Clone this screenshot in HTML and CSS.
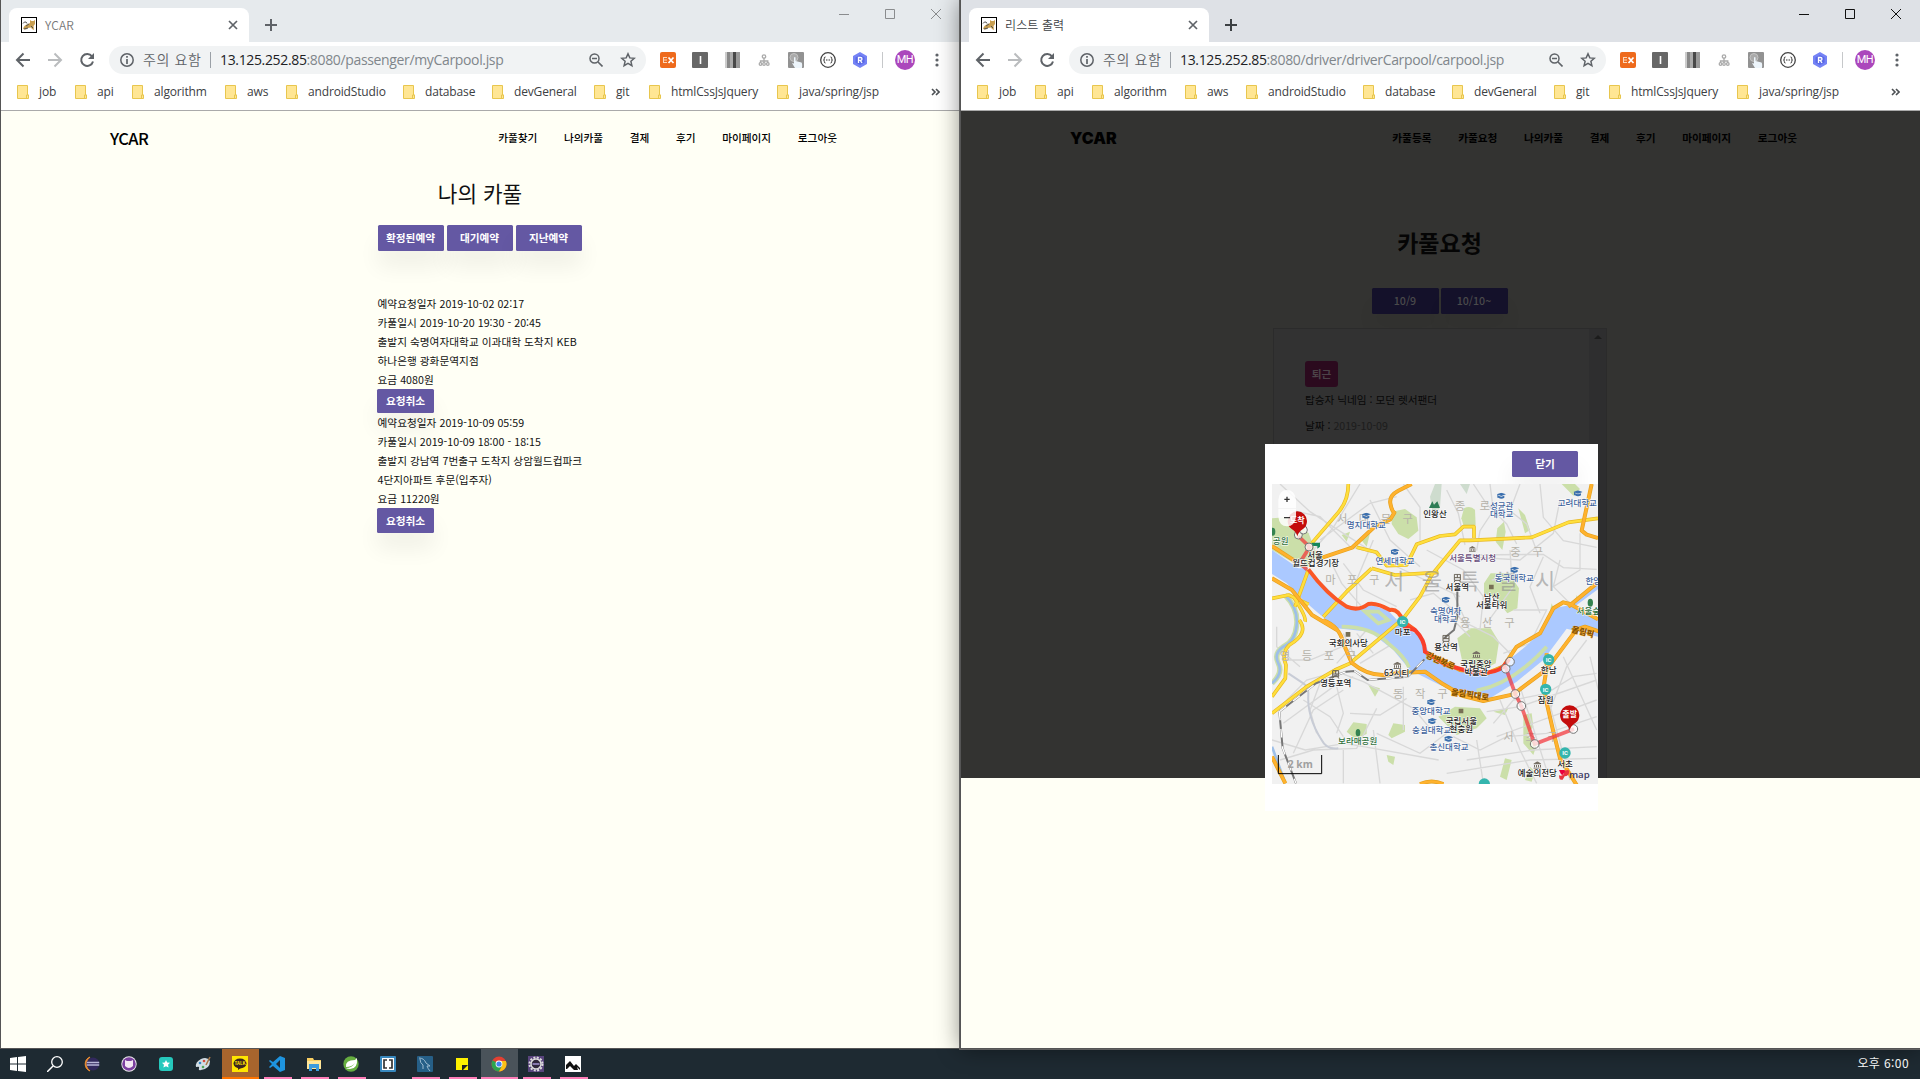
FILE: index.html
```html
<!DOCTYPE html>
<html lang="ko">
<head>
<meta charset="utf-8">
<title>YCAR</title>
<link rel="stylesheet" href="styles.css">
</head>
<body>
<svg class="defs" width="0" height="0" aria-hidden="true">
  <symbol id="cat" viewBox="0 0 16 16"><rect x=".5" y=".5" width="15" height="15" fill="#fff" stroke="#000"/><path d="M2 12q1-4 5-5l2-1 0-3 1.500 1h2l1.500-1v4l-1.500 2 .5 4-2-1-1-1.500-3 .5-2 1.500z" fill="#c9a052"/><path d="M2 6.500q1-2 3-1.500l1 1.500M5 9l3-2M3 12l4-1M10 9l2 2" stroke="#555" fill="none"/></symbol>
  <symbol id="close" viewBox="0 0 10 10"><path d="M1 1l8 8M9 1L1 9" stroke="currentColor" stroke-width="1.700"/></symbol>
  <symbol id="plus" viewBox="0 0 12 12"><path d="M6 0v12M0 6h12" stroke="currentColor" stroke-width="2"/></symbol>
  <symbol id="back" viewBox="0 0 16 16"><path d="M15 8H2M8.500 1.500L2 8l6.500 6.500" fill="none" stroke="currentColor" stroke-width="2"/></symbol>
  <symbol id="forward" viewBox="0 0 16 16"><path d="M1 8h13M7.500 1.500L14 8l-6.500 6.500" fill="none" stroke="currentColor" stroke-width="2"/></symbol>
  <symbol id="reload" viewBox="0 0 16 16"><path d="M13 4.300A6 6 0 1 0 14 9.500" fill="none" stroke="currentColor" stroke-width="2"/><path d="M15 1v6H9z" fill="currentColor"/></symbol>
  <symbol id="info" viewBox="0 0 14 14"><circle cx="7" cy="7" r="6.200" fill="none" stroke="currentColor" stroke-width="1.500"/><path d="M7 3v1.700M7 6v5" stroke="currentColor" stroke-width="1.700"/></symbol>
  <symbol id="zoom" viewBox="0 0 14 14"><circle cx="5.500" cy="5.500" r="4.500" fill="none" stroke="currentColor" stroke-width="1.500"/><path d="M9 9l4.500 4.500M3 5.500h5" stroke="currentColor" stroke-width="1.600"/></symbol>
  <symbol id="star" viewBox="0 0 16 16"><path d="M8 1.800l1.800 4.100 4.500.4-3.400 3 1 4.400L8 11.400l-3.900 2.300 1-4.400-3.400-3 4.500-.4z" fill="none" stroke="currentColor" stroke-width="1.500"/></symbol>
  <symbol id="ex" viewBox="0 0 16 16"><rect width="16" height="16" rx="2" fill="#ee6a1c"/><path d="M3 5.500h4M3 8h4M3 10.500h4M3.500 5v6" stroke="#fcd6b8"/><path d="M8.500 5.500l5 5.500M13.500 5.500l-5 5.500" stroke="#fff" stroke-width="1.800"/></symbol>
  <symbol id="ibar" viewBox="0 0 16 16"><rect width="16" height="16" rx="1" fill="#676767"/><path d="M8.500 4v8" stroke="#fff" stroke-width="1.600"/></symbol>
  <symbol id="bars" viewBox="0 0 16 16"><path fill="#ccc" d="M1 0h3v16H1z"/><path fill="#888" d="M3 0h3v16H3z"/><path fill="#aaa" d="M6 0h4v16H6z"/><path fill="#484848" d="M9 0h3v16H9z"/><path fill="#999" d="M12 0h4v16h-4z"/></symbol>
  <symbol id="tree" viewBox="0 0 16 16"><g fill="none" stroke="#aaa" stroke-width="1.300"><circle cx="8" cy="4.500" r="1.700"/><circle cx="4.500" cy="12" r="1.300"/><circle cx="8" cy="12" r="1.300"/><circle cx="11.800" cy="12" r="1.300"/><path d="M8 6v5M4.500 11V9h7.300v2"/></g></symbol>
  <symbol id="hand" viewBox="0 0 16 16"><rect width="16" height="16" rx="1" fill="#929292"/><circle cx="6" cy="5.500" r="4" fill="#aaa" stroke="#c4c4c4"/><path d="M6 5.500q1-1 1.500 0V9l6 1.500q1 1 .5 5.500H7L4 11l2 .5z" fill="#edf5fb"/></symbol>
  <symbol id="braces" viewBox="0 0 16 16"><circle cx="8" cy="8" r="7.300" fill="none" stroke="#444" stroke-width="1.300"/><path d="M5.500 5q-1.500 0-1.200 1.500T3.500 8q1 0 .8 1.500T5.500 11M10.500 5q1.500 0 1.200 1.500T12.500 8q-1 0-.8 1.500T10.500 11M6 8h1M7.500 8h1M9 8h1" fill="none" stroke="#333"/></symbol>
  <symbol id="hex" viewBox="0 0 16 16"><path d="M8 0l7 4v8l-7 4-7-4V4z" fill="#7583f5"/><path d="M8 3l4.500 2.500v5L8 13l-4.500-2.500v-5z" fill="#5a69e6"/><path d="M6.500 11V5.500h2q1.500 0 1.500 1.400t-1.500 1.400h-2M8.300 8.300L10 11" fill="none" stroke="#fff" stroke-width="1.300"/></symbol>
  <symbol id="dots" viewBox="0 0 4 14"><circle cx="2" cy="2" r="1.600"/><circle cx="2" cy="7" r="1.600"/><circle cx="2" cy="12" r="1.600"/></symbol>
  <symbol id="folder" viewBox="0 0 12 14"><path d="M.5.500h10v9.500h1v3.500h-11z" fill="#ffe694" stroke="#e8c64e"/><path d="M9.500 13v-3h2v3" fill="#ffe694" stroke="#e8c64e"/></symbol>
  <symbol id="chev" viewBox="0 0 9 8"><path d="M1 1l3 3-3 3M5 1l3 3-3 3" fill="none" stroke="currentColor" stroke-width="1.600"/></symbol>
  <symbol id="winctl" viewBox="0 0 104 12"><path d="M1 6.500h10M47.500 1.500h9v9h-9zM93 1l10 10M103 1L93 11" fill="none" stroke="currentColor"/></symbol>
  <symbol id="univ" viewBox="0 0 28 20"><path d="M0 5L14 0l14 5-14 5zM5 9l9 3 9-3v6q-9 6-18 0zM2 6h3v9H2z" fill="#3b6fae"/></symbol>
  <symbol id="stn" viewBox="0 0 24 28"><path d="M3 2h18v18H3zM3 12h18M12 2v10M6 20l-4 6M18 20l4 6" fill="none" stroke="#666055" stroke-width="3"/></symbol>
  <symbol id="hall" viewBox="0 0 24 22"><path d="M0 7L12 0l12 7v2H0zM2 11h3v7H2zM8 11h3v7H8zM14 11h3v7h-3zM20 11h3v7h-3zM0 19h24v3H0z" fill="#777065"/></symbol>
</svg>

<main class="desktop">
  <section class="window inactive">
    <div class="tabstrip">
      <div class="tab"><svg class="favicon"><use href="#cat"/></svg><span class="tab-title">YCAR</span><svg class="tab-close"><use href="#close"/></svg></div>
      <svg class="newtab"><use href="#plus"/></svg>
      <svg class="winctl"><use href="#winctl"/></svg>
    </div>
    <div class="toolbar">
      <span class="cell"><svg class="i16"><use href="#back"/></svg></span>
      <span class="cell fwd"><svg class="i16"><use href="#forward"/></svg></span>
      <span class="cell"><svg class="i16"><use href="#reload"/></svg></span>
      <div class="omnibox"><svg class="i14"><use href="#info"/></svg><span class="warn">주의 요함</span><span class="url"><b>13.125.252.85</b>:8080/passenger/myCarpool.jsp</span><span class="cell"><svg class="i14"><use href="#zoom"/></svg></span><span class="cell"><svg class="i16"><use href="#star"/></svg></span></div>
      <div class="exts"><span class="cell"><svg class="i16"><use href="#ex"/></svg></span><span class="cell"><svg class="i16"><use href="#ibar"/></svg></span><span class="cell"><svg class="i16"><use href="#bars"/></svg></span><span class="cell"><svg class="i16"><use href="#tree"/></svg></span><span class="cell"><svg class="i16"><use href="#hand"/></svg></span><span class="cell"><svg class="i16"><use href="#braces"/></svg></span><span class="cell"><svg class="i16"><use href="#hex"/></svg></span></div>
      <span class="avatar">MH</span>
      <span class="cell"><svg class="dots"><use href="#dots"/></svg></span>
    </div>
    <div class="bookmarks">
      <span class="bm b1"><svg><use href="#folder"/></svg>job</span><span class="bm b2"><svg><use href="#folder"/></svg>api</span><span class="bm b3"><svg><use href="#folder"/></svg>algorithm</span><span class="bm b4"><svg><use href="#folder"/></svg>aws</span><span class="bm b5"><svg><use href="#folder"/></svg>androidStudio</span><span class="bm b6"><svg><use href="#folder"/></svg>database</span><span class="bm b7"><svg><use href="#folder"/></svg>devGeneral</span><span class="bm b8"><svg><use href="#folder"/></svg>git</span><span class="bm b9"><svg><use href="#folder"/></svg>htmlCssJsJquery</span><span class="bm"><svg><use href="#folder"/></svg>java/spring/jsp</span>
      <svg class="chev"><use href="#chev"/></svg>
    </div>
    <div class="page passenger">
      <header class="site"><span class="logo">YCAR</span><nav><a>카풀찾기</a><a>나의카풀</a><a>결제</a><a>후기</a><a>마이페이지</a><a>로그아웃</a></nav></header>
      <h1>나의 카풀</h1>
      <div class="btns"><button>확정된예약</button><button>대기예약</button><button>지난예약</button></div>
      <div class="list">
        <p>예약요청일자 2019-10-02 02:17</p><p>카풀일시 2019-10-20 19:30 - 20:45</p><p>출발지 숙명여자대학교 이과대학 도착지 KEB<br>하나은행 광화문역지점</p><p>요금 4080원</p>
        <button class="cancel">요청취소</button>
        <p>예약요청일자 2019-10-09 05:59</p><p>카풀일시 2019-10-09 18:00 - 18:15</p><p>출발지 강남역 7번출구 도착지 상암월드컵파크<br>4단지아파트 후문(입주자)</p><p>요금 11220원</p>
        <button class="cancel last">요청취소</button>
      </div>
    </div>
  </section>

  <section class="window active">
    <div class="tabstrip">
      <div class="tab"><svg class="favicon"><use href="#cat"/></svg><span class="tab-title">리스트 출력</span><svg class="tab-close"><use href="#close"/></svg></div>
      <svg class="newtab"><use href="#plus"/></svg>
      <svg class="winctl"><use href="#winctl"/></svg>
    </div>
    <div class="toolbar">
      <span class="cell"><svg class="i16"><use href="#back"/></svg></span>
      <span class="cell fwd"><svg class="i16"><use href="#forward"/></svg></span>
      <span class="cell"><svg class="i16"><use href="#reload"/></svg></span>
      <div class="omnibox"><svg class="i14"><use href="#info"/></svg><span class="warn">주의 요함</span><span class="url"><b>13.125.252.85</b>:8080/driver/driverCarpool/carpool.jsp</span><span class="cell"><svg class="i14"><use href="#zoom"/></svg></span><span class="cell"><svg class="i16"><use href="#star"/></svg></span></div>
      <div class="exts"><span class="cell"><svg class="i16"><use href="#ex"/></svg></span><span class="cell"><svg class="i16"><use href="#ibar"/></svg></span><span class="cell"><svg class="i16"><use href="#bars"/></svg></span><span class="cell"><svg class="i16"><use href="#tree"/></svg></span><span class="cell"><svg class="i16"><use href="#hand"/></svg></span><span class="cell"><svg class="i16"><use href="#braces"/></svg></span><span class="cell"><svg class="i16"><use href="#hex"/></svg></span></div>
      <span class="avatar">MH</span>
      <span class="cell"><svg class="dots"><use href="#dots"/></svg></span>
    </div>
    <div class="bookmarks">
      <span class="bm b1"><svg><use href="#folder"/></svg>job</span><span class="bm b2"><svg><use href="#folder"/></svg>api</span><span class="bm b3"><svg><use href="#folder"/></svg>algorithm</span><span class="bm b4"><svg><use href="#folder"/></svg>aws</span><span class="bm b5"><svg><use href="#folder"/></svg>androidStudio</span><span class="bm b6"><svg><use href="#folder"/></svg>database</span><span class="bm b7"><svg><use href="#folder"/></svg>devGeneral</span><span class="bm b8"><svg><use href="#folder"/></svg>git</span><span class="bm b9"><svg><use href="#folder"/></svg>htmlCssJsJquery</span><span class="bm"><svg><use href="#folder"/></svg>java/spring/jsp</span>
      <svg class="chev"><use href="#chev"/></svg>
    </div>
    <div class="page driver">
      <div class="dimmed">
        <header class="site"><span class="logo">YCAR</span><nav><a>카풀등록</a><a>카풀요청</a><a>나의카풀</a><a>결제</a><a>후기</a><a>마이페이지</a><a>로그아웃</a></nav></header>
        <h1>카풀요청</h1>
        <div class="btns"><button>10/9</button><button>10/10~</button></div>
        <div class="request">
          <div class="request-body"><span class="badge">퇴근</span><p>탑승자 닉네임 : 모던 렛서팬더</p><p>날짜 : <i>2019-10-09</i></p></div>
          <div class="scroll"></div>
        </div>
      </div>
      <div class="modal">
        <div class="modal-head"><button>닫기</button></div>
        <svg class="map" viewBox="36 132 978 900">
          <rect x="36" y="132" width="978" height="900" fill="#f1f1f1"/>
          <g fill="#cbdfa9">
            <path d="M36 235l60-5 50 50 25 65-35 45-100-60z"/>
            <path d="M395 215l40-8 35 25 5 40-30 25-30-15-20-30z"/>
            <path d="M612 205q20-10 33 5l2 45-35 5-8-25z"/>
            <path d="M712 265l20-20 5 30-10 55-20-25zM775 205l20 20 15 45-15 10zM905 132h40l15 15-20 20zM245 285l25-10-10 30zM300 295l30-15-10 40z"/>
            <path d="M672 430l20-30 55 0 30 45-5 60-30 15-35-45-35-15z"/>
            <path d="M592 595l40-30 60 0 25 40-10 65-40 20-60-25z"/>
            <path d="M535 830l50-30 75 5 20 30-30 30-60 20z"/>
            <path d="M260 875l20-28 40 5 0 30-35 15zM385 885l15-35 35 5 0 20-40 20zM380 945l25 5-5 25-15-10z"/>
            <path d="M790 825l25-5 5 40-20 25 30 30-10 30-30-35zM735 955l20 5-15 60-20-10zM810 980l15 15-10 30-20-5zM700 815l45-10-10 20zM325 735l35 10-15 25z"/>
            <path d="M875 490l8 20-15 10zM950 465l8 20-15 10zM385 500l-30 30-20-8z"/>
          </g>
          <g fill="#cedcce"><path d="M510 170l15-38h20l-5 70-20 30zM600 132h30l-10 30z"/></g>
          <g fill="none" stroke="#d8d8d8" stroke-width="4">
            <path d="M60 132L150 215 265 290 400 375 600 470M90 210l90 20 90 90 80 20M180 300l150-110 80-20M300 132l-80 130-70 80M215 370l30 60 60 70M250 370l60 80 100 50M340 300l-50 120 0 80M330 180l60 120 90 80M430 132l50 70 0 100"/>
            <path d="M560 150l35 70 20 95M640 132l40 60 60 60 30 60M690 132l10 80-40 60-10 60M780 132l-30 80 50 40 30 80M840 132l10 100 60 70 100 20M900 180l-20 100-100 80-160-10M620 345l230-2 60 40 100 5M850 350l-40 90 30 80M900 360l-20 80 60 60M960 280l0 110-80 50M750 330l5 80-60 10"/>
            <path d="M500 330l110 60 60 80-10 100M450 480l70-20 60 50 50 60M530 540l50 0 50 50M580 460l40 90 80 40 60 60M760 440l-80 110M760 510l100 0-50 100-80 30"/>
            <path d="M60 800l80-80 90-25 80 30 150 80 50 60M70 850l150-110 60-30M100 940l60-130 90-60M130 780l80 50 40 60M180 730l-30 80 20 70M230 740l20 80-20 60M36 900l100 30 120-20 280 50M60 960l100-30 130-5 60-120M250 1030l0-100M340 870l20 160M350 880l130 60 80-60M270 820l90 5 80-50M430 740l0 130"/>
            <path d="M580 890l80 40 80-40 120-10 150-50M700 850l60-70 100-20 80-50 70-10M620 960l200-30 190-10M650 900l20 130M720 780l60 150 50 100M780 740l80 250M850 720l80 300M910 650l100 220M980 600l-60 80-50 130M1010 720l-230 80-100 15M1010 780l-300 110M990 650l25 100M560 1000l250-40 200-5"/>
            <path d="M50 560l0 60 70 60M70 660l80 0 120-50M250 580l40 80M290 580l50 60M320 570l-90 100M400 610l-100 60"/>
          </g>
          <path d="M85 700l45 30q15 10 15 30-5 70 40 140 15 30 50 25" fill="none" stroke="#c8ccd6" stroke-width="6"/>
          <path d="M36 330L115 385H140L255 498 300 506 330 493 385 512 430 560 485 590 510 645 600 692 680 700 740 665 790 625 840 580 880 505 920 497 955 500 1014 540V590L920 566 850 660 770 725 690 775 600 755 540 735 450 690 400 630 330 575 230 565 170 515 130 480 80 430 36 402z" fill="#abc9ff"/>
          <path d="M930 490l84-60v18l-75 55z" fill="#abc9ff"/>
          <path d="M75 465q40 40 35 90t-40 65q-30 20-15 50t-19 60" fill="none" stroke="#cbdfa9" stroke-width="16"/><path d="M75 465q40 40 35 90t-40 65q-30 20-15 50t-19 60M36 920l40 110" fill="none" stroke="#9dbfe8" stroke-width="8"/>
          <path d="M245 560q90 0 140 50 50 40 62 72M650 752q110-22 210-132M315 515l40 0 30 25-30 10z" fill="none" stroke="#cbdfa9" stroke-width="11"/>
          <g fill="none" stroke="#e7b824" stroke-width="11" stroke-linejoin="round">
            <path id="yellow" d="M265 132q0 50-30 85L155 310M290 322l60 15 30 40 60-2 30-62 70-25 45-5 25-23h32v34M630 301l125-6 60-3 110-45 89-12M630 301H600L515 405 480 470 430 535 270 670 225 690 140 740 36 820M335 385l70 20 130-8M335 385l-75 70-70 75M145 390l-40 110M36 475l50-10 60 28M100 470q40 60 35 75M118 540q30 40-30 75-25 25-10 60l-2 40-40 55"/>
            <use href="#yellow" stroke="#ffdf3c" stroke-width="7"/>
          </g>
          <g fill="none" stroke="#e6a21e" stroke-width="12" stroke-linejoin="round">
            <path id="orange" d="M455 132l-40 20q-28 15-24 38t12 28l-12 20-45 20-70 65-105 35M36 318l80 52M36 415l60 35 60 75 75 45M190 540q50 20 60 70l25 58q60 50 130 32l90-5 55 38 60 35 60 15 90-20 100-75 90-120 25-8 95 32M510 645l90 45 80 10 50-20 40-60 70-40 40-75 30-18 20 5 84 46M925 500l85-70M995 132l-30 140 15 12 34 10M860 640v45l-10 60 30 130 20 80 50 80M36 950l40 80M480 1032q35-15 70 0"/>
            <use href="#orange" stroke="#ffb22e" stroke-width="8"/>
          </g>
          <g fill="none"><path id="rail" d="M58 815l110-85 90-35 25-2 40 27 120-10 50-52M58 815l10 110 40 105M592 450v80l-10 40-30 25" stroke="#777" stroke-width="6"/><path d="M58 815l110-85 90-35 25-2 40 27 120-10 50-52M58 815l10 110 40 105" stroke="#fff" stroke-width="4" stroke-dasharray="26 26"/></g>
          <g class="district"><text x="345" y="249" textLength="228">서 대 문 구</text><text x="277" y="431" textLength="162">마 포 구</text><text x="637" y="211" textLength="105">종 로</text><text x="800" y="348" textLength="98">중 구</text><text x="682" y="562" textLength="164">용 산 구</text><text x="174" y="661" textLength="230">영 등 포 구</text><text x="481" y="774" textLength="164">동 작 구</text><text x="812" y="903" textLength="164">서 초 구</text></g>
          <text class="city" x="629" y="447" textLength="514">서 울 특 별 시</text>
          <path d="M145 388q55 75 115 112 35 15 65-8 25-5 65 18 25-5 40 35l35 25" fill="none" stroke="#fb5725" stroke-width="12"/>
          <path d="M115 288l34 33-30 48 22 20" fill="none" stroke="#f42f34" stroke-opacity=".7" stroke-width="11"/>
          <path d="M430 550l5 12 30 8q30 30 30 65l60 38 75 22q70 10 100-15l17-22" fill="none" stroke="#f93e2b" stroke-width="12"/>
          <path d="M736 680l30 82 18 36 40 114 118-45" fill="none" stroke="#f42f34" stroke-opacity=".7" stroke-width="11"/>
          <text class="road" transform="translate(496 652) rotate(24)">강변북로</text><text class="road" transform="translate(572 764) rotate(9)">올림픽대로</text><text class="road" transform="translate(933 576) rotate(14)">올림픽</text>
          <g fill="#fff" fill-opacity=".75" stroke="#777" stroke-width="3"><circle cx="115" cy="285" r="12"/><circle cx="130" cy="270" r="12"/><circle cx="147" cy="321" r="12"/><circle cx="123" cy="368" r="12"/><circle cx="737" cy="686" r="13"/><circle cx="750" cy="665" r="13"/><circle cx="766" cy="762" r="13"/><circle cx="784" cy="798" r="13"/><circle cx="824" cy="912" r="13"/><circle cx="940" cy="867" r="13"/></g>
          <g><use href="#univ" x="305" y="218" width="28" height="20"/><use href="#univ" x="391" y="326" width="28" height="20"/><use href="#univ" x="710" y="158" width="28" height="20"/><use href="#univ" x="940" y="151" width="28" height="20"/><use href="#univ" x="750" y="380" width="28" height="20"/><use href="#univ" x="544" y="470" width="28" height="20"/><use href="#univ" x="500" y="777" width="28" height="20"/><use href="#univ" x="503" y="834" width="28" height="20"/><use href="#univ" x="552" y="887" width="28" height="20"/></g>
          <use href="#stn" x="580" y="401" width="24" height="28"/><use href="#stn" x="546" y="584" width="24" height="28"/><use href="#stn" x="215" y="690" width="24" height="28"/><use href="#hall" x="625" y="318" width="24" height="18"/><use href="#hall" x="637" y="633" width="24" height="22"/><use href="#hall" x="820" y="964" width="24" height="22"/><use href="#hall" x="400" y="665" width="24" height="22"/>
          <path d="M257 576h14v14h-14zM687 434h14v14h-14zM596 806h14v14h-14z" fill="#777055"/><path d="M507 204l10-20 5 10 10-10 8 20z" fill="#2e7d55"/><path d="M154 308h26v12l-8 6v-8h-12z" fill="#16865a"/><g fill="#348350"><ellipse cx="294" cy="878" rx="7" ry="11"/><ellipse cx="991" cy="488" rx="8" ry="12"/><ellipse cx="38" cy="275" rx="8" ry="12"/></g>
          <g class="place univ"><text x="319" y="264">명지대학교</text><text x="405" y="371">연세대학교</text><text x="725" y="207">성균관</text><text x="725" y="231">대학교</text><text x="952" y="197">고려대학교</text><text x="763" y="424">동국대학교</text><text x="1000" y="432">한양</text><text x="557" y="521">숙명여자</text><text x="557" y="545">대학교</text><text x="513" y="822">중앙대학교</text><text x="515" y="879">숭실대학교</text><text x="567" y="931">총신대학교</text></g>
          <g class="place"><text x="525" y="230">인왕산</text><text x="165" y="354">서울</text><text x="167" y="379">월드컵경기장</text><text x="592" y="449">서울역</text><text x="695" y="480">남산</text><text x="695" y="505">서울타워</text><text x="428" y="584">마포</text><text x="265" y="619">국회의사당</text><text x="227" y="737">영등포역</text><text x="410" y="709">63시티</text><text x="558" y="631">용산역</text><text x="648" y="681">국립중앙</text><text x="648" y="706">박물관</text><text x="866" y="700">한남</text><text x="857" y="788">잠원</text><text x="604" y="853">국립서울</text><text x="604" y="876">현충원</text><text x="832" y="1008">예술의전당</text><text x="915" y="980">서초</text></g>
          <g class="place green"><text x="62" y="312">공원</text><text x="985" y="522">서울숲</text><text x="293" y="912">보라매공원</text></g><text class="place purple" x="638" y="362">서울특별시청</text>
          <g fill="#35b5ae"><circle cx="428" cy="545" r="17"/><circle cx="866" cy="659" r="17"/><circle cx="857" cy="748" r="17"/><circle cx="915" cy="939" r="17"/><path d="M656 1032a17 17 0 0 1 34 0z"/></g><g class="ic"><text x="428" y="552">IC</text><text x="866" y="666">IC</text><text x="857" y="755">IC</text><text x="915" y="946">IC</text></g>
          <g fill="#c40c0c"><path id="pin" d="M112 289q-3-13-17-22-12-9-12-24a29 29 0 0 1 58 0q0 15-12 24-14 9-17 22z"/><use href="#pin" x="817" y="582"/></g>
          <g fill="#fff" fill-opacity=".85"><path d="M55 205v-26q3-29 26-29t27 29v26zM55 207v23q3 29 26 29t27-29v-23z"/></g><path d="M73 178h16M81 170v16M72 233h18" stroke="#333" stroke-width="4"/>
          <g class="pin"><text x="112" y="249">도착</text><text x="929" y="832">출발</text></g>
          <text class="scale" x="121" y="984">2 km</text><path d="M55 945v56h130v-56" fill="none" stroke="#000" stroke-width="3"/>
          <path d="M897 990h16q6 2 4 9-7-1-9 6l-5-2z" fill="#ea003c"/><path d="M915 992q14-5 13 3-1 12-14 14l-6 10q-8 2-10-4l-1-9q10 3 14-4z" fill="#e8343f"/><text class="tmap" x="958" y="1014">map</text>
        </svg>
      </div>
    </div>
  </section>
</main>

<footer class="taskbar">
  <div class="apps">
    <span><svg viewBox="0 0 16 16"><path d="M0 2l7-1v6.500H0zM8 1l8-1v7.500H8zM0 8.500h7V15l-7-1zM8 8.500h8V16l-8-1z" fill="#fff"/></svg></span>
    <span><svg viewBox="0 0 16 16"><circle cx="10" cy="6" r="5.300" fill="none" stroke="#fff" stroke-width="1.300"/><path d="M6 10l-6 6" stroke="#fff" stroke-width="1.500"/></svg></span>
    <span><svg viewBox="0 0 16 16"><path d="M6 1A7.500 7.500 0 0 0 6 15 9 9 0 0 1 6 1z" fill="#f09032" stroke="#f09032"/><circle cx="9" cy="8" r="6.500" fill="#32295d"/><path d="M2.800 6.500h12.400M2.800 9h12.400" stroke="#b9b6d7" stroke-width="1.400"/></svg></span>
    <span><svg viewBox="0 0 16 16"><circle cx="8" cy="8" r="7.700" fill="#eee"/><circle cx="8" cy="8" r="6.800" fill="#7b409f"/><path d="M4 4l2 1h4l2-1v6q-4 4-8 0z" fill="#f3e8f3"/></svg></span>
    <span><svg viewBox="0 0 16 16"><rect x="1" y="1" width="14" height="14" rx="3" fill="#26c9bd"/><path d="M8 4l1.200 2.500 2.800.3-2 2 .6 2.700L8 10.300 5.400 11.500 6 8.800 4 6.800l2.800-.3z" fill="#fff"/></svg></span>
    <span><svg viewBox="0 0 16 16"><path d="M1 11q-1-5 5-8t9 2q0 8-9 9-3 1-2-2 1-2-3-1z" fill="#d2dde4"/><circle cx="5" cy="7" r="1.300" fill="#3586c4"/><circle cx="9" cy="5" r="1.300" fill="#d84b3a"/><circle cx="8" cy="11" r="1.300" fill="#52a45a"/><path d="M15 1l-4 8" stroke="#a97747" stroke-width="1.600"/></svg></span>
    <span class="kakao"><svg viewBox="0 0 16 16"><path fill="#ffe500" d="M0 0h16v16H0z"/><ellipse cx="8" cy="7.500" rx="6.500" ry="5" fill="#3b2420"/><path d="M6 10l0 4 4-3z" fill="#3b2420"/><text x="8" y="9.300" text-anchor="middle" font-size="4.500" font-weight="700" fill="#ffe500">TALK</text></svg></span>
    <span class="run"><svg viewBox="0 0 16 16"><path d="M11 0l5 2v12l-5 2-7-6-3 2-1-1 3-3-3-3 1-1 3 2zM11 4L7 8l4 4z" fill="#1e94df"/></svg></span>
    <span class="run"><svg viewBox="0 0 16 16"><path d="M1 2h6l1 2h7v9H1z" fill="#f9cf62"/><path d="M1 5h14v8H1z" fill="#ffe69a"/><path d="M3 8h10v7h-3v-3H6v3H3z" fill="#3e9bdc"/></svg></span>
    <span class="run"><svg viewBox="0 0 16 16"><circle cx="8" cy="8" r="7.700" fill="#66ad40"/><path d="M3 11Q2 4 12 4l2-2q1 11-7 11-3 0-4-1 6 0 9-5-3 4-9 4z" fill="#fff"/></svg></span>
    <span><svg viewBox="0 0 16 16"><rect width="16" height="16" rx="1" fill="#3787bd"/><path fill="#fff" d="M2 2h12v12H2z"/><path d="M7 4H4v8h3M9 4h3v8H9" fill="none" stroke="#333" stroke-width="1.700"/></svg></span>
    <span class="run"><svg viewBox="0 0 16 16"><rect width="16" height="16" rx="1" fill="#265f87"/><path d="M2 2q5 0 7 5l4 3-3 0q1 3 3 5M3 3q0 4 3 6v4" fill="none" stroke="#9cbbd0"/></svg></span>
    <span class="run"><svg viewBox="0 0 16 16"><path fill="#fff100" d="M2 2h12v12H2z"/><path d="M8 14V9h6l-5 5z" fill="#222"/></svg></span>
    <span class="run current"><svg viewBox="0 0 16 16"><circle cx="8" cy="8" r="7.500" fill="#e34032"/><path d="M8 8L1.500 4.300A7.500 7.500 0 0 0 8 15.500l3.200-5.500z" fill="#2da44e"/><path d="M8 5h6.900a7.500 7.500 0 0 1-6.900 10.500l3-5.500z" fill="#fbc116"/><circle cx="8" cy="8" r="3.400" fill="#fff"/><circle cx="8" cy="8" r="2.600" fill="#4285ee"/></svg></span>
    <span class="run"><svg viewBox="0 0 16 16"><path fill="#59447d" d="M0 0h16v16H0z"/><circle cx="8" cy="8" r="6.500" fill="none" stroke="#ddd" stroke-width="2" stroke-dasharray="2 1.400"/><circle cx="8" cy="8" r="5" fill="#30263d" stroke="#ddd" stroke-width="1.500"/><path d="M4.500 8h7" stroke="#8778af" stroke-width="2"/></svg></span>
    <span class="run"><svg viewBox="0 0 16 16"><path fill="#fff" d="M0 0h16v16H0z"/><path d="M1 13V9l4-4 4 5 2-2 4 4v2l-3-3 1 3H9l-4-4-3 3z" fill="#111"/></svg></span>
  </div>
  <span class="clock">오후 6:00</span>
</footer>
</body>
</html>
```
FILE: styles.css
```css
* { box-sizing: border-box; }
body { margin: 0; width: 1920px; height: 1079px; overflow: hidden; display: flex; flex-direction: column; font-family: "Noto Sans CJK KR", sans-serif; }
p, h1 { margin: 0; font-weight: 400; }
svg { display: block; flex: none; }
.defs { position: absolute; }

.desktop { display: flex; height: 1049px; }
.window { width: 960px; height: 1049px; border-left: 1px solid #555; border-bottom: 1px solid #555; background: #fffff5; color: #5f6368; }
.window.active { position: relative; box-shadow: 0 0 22px rgba(0,0,0,.45); outline: 1px solid #606060; outline-offset: 0; }

.tabstrip { display: flex; height: 42px; padding: 8px 0 0 8px; background: #e6eaed; }
.active .tabstrip { background: #dee1e6; }
.tab { width: 240px; height: 34px; padding: 0 11px 0 12px; display: flex; align-items: center; background: #fff; border-radius: 8px 8px 0 0; font-size: 12px; }
.favicon { width: 16px; height: 16px; }
.tab-title { flex: 1; padding-left: 8px; line-height: 18px; font-weight: 350; color: #3c4043; letter-spacing: .1px; }
.inactive .tab-title { color: #777; }
.tab-close { width: 10px; height: 10px; }
.newtab { width: 12px; height: 12px; margin: 11px 0 0 16px; }
.winctl { width: 104px; height: 12px; margin: 0 18px 0 auto; color: #8a8c8e; }
.active .winctl { color: #111; }
.active .newtab { color: #3c4043; }

.toolbar { height: 36px; display: flex; align-items: center; background: #fff; padding: 0 0 1px 6px; }
.cell { width: 32px; display: flex; justify-content: center; flex: none; }
.i16 { width: 16px; height: 16px; }
.i14 { width: 14px; height: 14px; }
.fwd { color: #babcbe; }
.omnibox { width: 537px; height: 28px; margin: 0 6px; padding: 0 2px 0 11px; border-radius: 14px; background: #f1f3f4; display: flex; align-items: center; }
.warn { width: 68px; margin-left: 9px; height: 16px; line-height: 15px; border-right: 1px solid #9aa0a6; font-size: 14px; font-weight: 350; white-space: nowrap; letter-spacing: .6px; }
.url { flex: 1; padding-left: 9px; font: 400 14px/20px "Open Sans", sans-serif; letter-spacing: -.35px; color: #80868b; white-space: nowrap; }
.url b { font-weight: 400; color: #202124; letter-spacing: -.35px; }
.exts { display: flex; padding-right: 6px; height: 16px; border-right: 1px solid #c6c8ca; }
.avatar { width: 20px; height: 20px; margin: 0 6px 0 12px; border-radius: 50%; background: #ab47bc; color: #fff; font: 11px/20px Roboto, sans-serif; text-align: center; letter-spacing: -.5px; }
.dots { width: 4px; height: 14px; fill: #5f6368; }

.bookmarks { display: flex; align-items: center; height: 33px; padding: 0 20px 5px 16px; background: #fff; border-bottom: 1px solid #aaa; font: 12px "Open Sans", sans-serif; letter-spacing: -.15px; color: #3c4043; white-space: nowrap; }
.bm { display: flex; align-items: center; gap: 10px; height: 20px; flex: none; }
.bm svg { width: 12px; height: 14px; }
.b1 { width: 58px; } .b2 { width: 57px; } .b3 { width: 93px; } .b4 { width: 61px; } .b5 { width: 117px; }
.b6 { width: 89px; } .b7 { width: 102px; } .b8 { width: 55px; } .b9 { width: 128px; }
.chev { width: 9px; height: 8px; margin-left: auto; color: #4c5054; }

.page { position: relative; color: #212529; font-size: 10.67px; }
.site { display: flex; justify-content: space-between; align-items: center; height: 54px; padding: 0 123px 0 109px; color: #000; }
.logo { font-size: 16.500px; font-weight: 500; line-height: 24px; letter-spacing: -.6px; }
.site nav { display: flex; gap: 26.600px; font-weight: 500; line-height: 16px; }
button { border: 0; border-radius: 1.500px; width: 66px; height: 26px; padding: 0; background: #6458a3; color: #fff; font: 700 10.67px/24px "Noto Sans CJK KR", sans-serif; box-shadow: 0 16px 22px rgba(0,0,0,.06); }
.btns { display: flex; justify-content: center; gap: 3px; padding-right: 2px; }
.passenger h1 { text-align: center; font-size: 21.300px; line-height: 32px; padding: 12px 1px 0 0; height: 60px; color: #111; }
.list { width: 206px; margin: 43px 0 0 376px; line-height: 19px; color: #111; white-space: nowrap; }
.list p { padding-left: .5px; letter-spacing: .02px; }
.cancel { display: block; width: 57px; height: 24px; }
.cancel.last { height: 25px; line-height: 25px; }

.dimmed { height: 667px; background: #333331; color: #080808; display: flex; flex-direction: column; }
.driver .site { color: #000; }
.driver .site .logo { font-family: Inter, sans-serif; font-weight: 900; font-size: 16px; letter-spacing: .1px; }
.driver .site nav { font-weight: 700; }
.driver h1 { text-align: center; font-size: 23px; font-weight: 700; line-height: 34px; margin-top: 60px; padding-right: 2px; height: 63px; color: #050505; }
.dimmed button { width: 67px; background: #14112a; color: #4a4a4a; font-weight: 500; box-shadow: 0 16px 18px rgba(0,0,0,.04); }
.dimmed .btns { gap: 2px; }
.request { display: flex; flex: 1; width: 334px; margin: 14px 0 0 312px; border: 1px solid #2b2b2b; border-bottom: 0; background: #323232; }
.request-body { flex: 1; padding: 32px 0 0 31px; font-weight: 700; line-height: 26px; letter-spacing: -.03px; }
.request-body i { font-style: normal; font-weight: 400; color: #1c1c1c; }
.badge { display: block; width: 33px; height: 26px; line-height: 25px; border-radius: 3px; background: #2b0a1e; color: #4c4348; text-align: center; }
.scroll { width: 17px; background: #2e2e2f; padding: 6px 0 0 5px; }
.scroll::before { content: ""; display: block; width: 0; border: 4px solid transparent; border-top: 0; border-bottom-color: #1c1c1c; }
.modal { position: absolute; left: 304px; top: 333px; width: 333px; height: 367px; background: #fff; padding-left: 7px; }
.modal-head { height: 40px; display: flex; justify-content: flex-end; padding: 7px 20px 0 0; }
.map { width: 326px; height: 300px; }
.map text { text-anchor: middle; }
.district { font-size: 34px; fill: #b5b2a9; }
.city { font-size: 66px; fill: #8e8e8e; fill-opacity: .6; }
.place { font-size: 25.500px; font-weight: 500; fill: #222; stroke: #fff; stroke-width: 3px; paint-order: stroke; }
.univ { fill: #3e639c; }
.green { fill: #30713c; }
.purple { fill: #664b79; }
.map .road { font-size: 25px; font-weight: 700; text-anchor: start; fill: #7a4b00; stroke: #ffae28; stroke-width: 2px; paint-order: stroke; }
.ic { font: 700 18px Roboto, sans-serif; fill: #fff; }
.pin { font-size: 24px; font-weight: 700; fill: #fff; }
.scale { font: 700 31px "Noto Sans", sans-serif; fill: #a0a0a0; }
.tmap { font: 600 29px "Open Sans", sans-serif; fill: #3b3662; }

.taskbar { height: 30px; display: flex; justify-content: space-between; background: #1e2a32; }
.apps { display: flex; }
.apps > span { width: 37px; height: 30px; display: flex; align-items: center; justify-content: center; padding-right: 1px; }
.apps svg { width: 16px; height: 16px; }
.apps .run { background: linear-gradient(#ff7eb9, #ff7eb9) 50% 100% / 28px 2px no-repeat; }
.apps .current { background: linear-gradient(#ff7eb9, #ff7eb9) 50% 100% / 37px 2px no-repeat #4a535a; }
.apps .kakao { background: #a8652d; border-bottom: 2px solid #ff7400; padding-top: 2px; }
.clock { color: #fff; font-size: 12px; line-height: 28px; padding-right: 11px; letter-spacing: .4px; }
```
